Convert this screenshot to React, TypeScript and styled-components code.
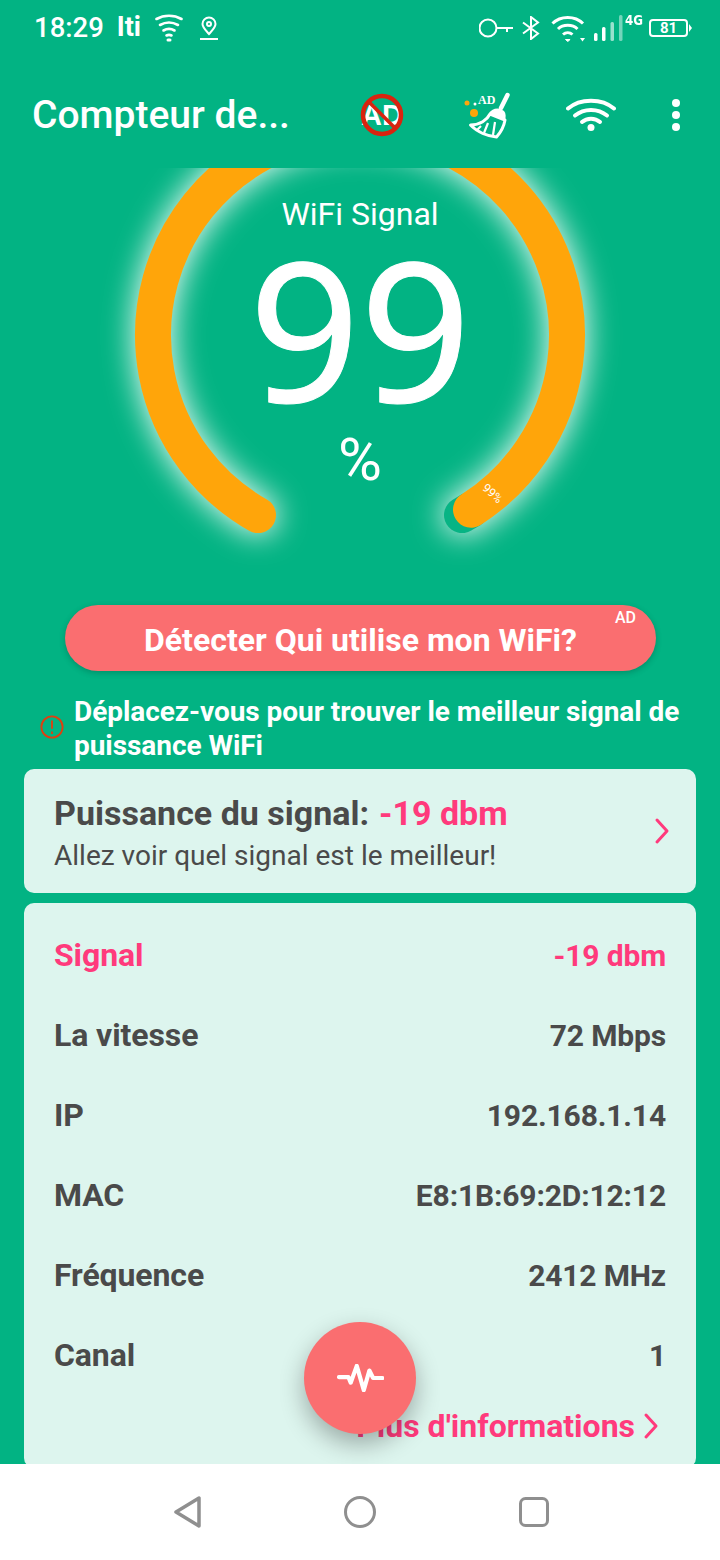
import styled, { createGlobalStyle } from "styled-components";

const GREEN = "#02b383";
const PANEL = "#ddf5ee";
const CORAL = "#fa6e70";
const PINK = "#ff3a7c";
const DARK = "#4a4a4a";
const ORANGE = "#ffa50a";

const GlobalStyle = createGlobalStyle`
  html, body {
    margin: 0;
    padding: 0;
    background: #fff;
  }
  * {
    box-sizing: border-box;
  }
`;

const Screen = styled.div`
  width: 720px;
  height: 1560px;
  position: relative;
  display: flex;
  flex-direction: column;
  overflow: hidden;
  background: ${GREEN};
  font-family: Roboto, "Liberation Sans", sans-serif;
  color: #fff;
`;

const StatusBar = styled.div`
  height: 56px;
  flex: none;
  display: flex;
  align-items: center;
  justify-content: space-between;
  padding: 0 32px 0 34px;
`;

const StatusGroup = styled.div`
  display: flex;
  align-items: center;
`;

const Clock = styled.span`
  font-size: 27.5px;
  font-weight: 500;
  line-height: 32px;
  margin-right: 13px;
`;

const Carrier = styled.span`
  font-size: 27px;
  font-weight: 700;
  line-height: 28px;
  margin: -2px 14px 0 0;
`;

const StatusIcon = styled.svg<{ $after?: number }>`
  display: block;
  flex: none;
  margin-right: ${(p) => p.$after ?? 0}px;
`;

const NetworkTag = styled.span`
  font-family: "DejaVu Sans", sans-serif;
  font-size: 14px;
  font-weight: 700;
  line-height: 14px;
  width: 18px;
  margin: -16px 6px 0 2px;
  transform: scaleX(0.85);
  transform-origin: left center;
`;

const Battery = styled.div`
  position: relative;
  width: 39px;
  height: 18px;
  border: 2px solid #fff;
  border-radius: 4px;
  font-size: 15px;
  font-weight: 700;
  line-height: 14px;
  text-align: center;
  &::after {
    content: "";
    position: absolute;
    top: 3px;
    right: -6px;
    border-left: 3px solid #fff;
    border-top: 4px solid transparent;
    border-bottom: 4px solid transparent;
  }
`;

const Toolbar = styled.div`
  height: 112px;
  flex: none;
  display: flex;
  align-items: center;
  padding: 6px 6px 0 32px;
`;

const Title = styled.div`
  flex: 1;
  font-size: 39px;
  font-weight: 500;
  line-height: 46px;
  white-space: nowrap;
`;

const Actions = styled.div`
  display: grid;
  grid-template-columns: 108px 108px 94px 76px;
  align-items: center;
  justify-items: center;
`;

const Gauge = styled.div`
  position: relative;
  height: 437px;
  flex: none;
  overflow: hidden;
  display: flex;
  flex-direction: column;
  align-items: center;
`;

const GaugeDrawing = styled.svg`
  position: absolute;
  inset: 0;
`;

const GaugeLabel = styled.div`
  position: relative;
  margin-top: 27px;
  font-size: 32px;
  line-height: 38px;
`;

const GaugeValue = styled.div`
  position: relative;
  font-family: "Noto Sans", "Open Sans", sans-serif;
  font-size: 194px;
  line-height: 188px;
  -webkit-text-stroke: 1px #fff;
`;

const GaugeUnit = styled.div`
  position: relative;
  margin-top: 4px;
  font-size: 60px;
  line-height: 70px;
`;

const DetectButton = styled.div`
  position: relative;
  flex: none;
  height: 66px;
  margin: 0 64px 0 65px;
  padding-top: 3px;
  border-radius: 33px;
  background: ${CORAL};
  box-shadow: 0 2px 6px rgba(0, 0, 0, 0.2);
  display: flex;
  align-items: center;
  justify-content: center;
  font-size: 32px;
  font-weight: 700;
`;

const AdBadge = styled.span`
  position: absolute;
  top: 3px;
  right: 20px;
  font-size: 16px;
  font-weight: 500;
  line-height: 20px;
`;

const Notice = styled.div`
  flex: none;
  margin: 24px 30px 6px 40px;
  display: flex;
  align-items: center;
  gap: 10px;
  font-size: 28px;
  font-weight: 700;
  line-height: 34px;
  letter-spacing: -0.05px;
  svg {
    flex: none;
    margin-top: -4px;
  }
`;

const Panel = styled.div`
  flex: none;
  background: ${PANEL};
  border-radius: 10px;
  margin: 0 24px;
  color: ${DARK};
`;

const SignalPanel = styled(Panel)`
  height: 124px;
  padding: 0 26px 0 30px;
  margin-bottom: 10px;
  display: flex;
  align-items: center;
  justify-content: space-between;
`;

const SignalText = styled.div`
  padding-top: 5px;
`;

const SignalHeading = styled.div`
  font-size: 34px;
  font-weight: 700;
  line-height: 40px;
`;

const SignalValue = styled.span`
  color: ${PINK};
  margin-left: 10px;
`;

const SignalHint = styled.div`
  font-size: 28px;
  line-height: 36px;
  margin-top: 5px;
`;

const DetailsPanel = styled(Panel)`
  height: 565px;
  padding: 12px 30px 0;
`;

const DetailRow = styled.div<{ $accent?: boolean }>`
  height: 80px;
  display: flex;
  align-items: center;
  justify-content: space-between;
  font-size: 30px;
  font-weight: 700;
  letter-spacing: -0.15px;
  color: ${(p) => (p.$accent ? PINK : DARK)};
`;

const RowLabel = styled.span`
  font-size: 32px;
  letter-spacing: -0.1px;
`;

const MoreLink = styled.div`
  height: 62px;
  display: flex;
  align-items: center;
  justify-content: flex-end;
  gap: 8px;
  margin-right: 7px;
  font-size: 32px;
  font-weight: 700;
  color: ${PINK};
`;

const PulseButton = styled.div`
  position: absolute;
  left: 304px;
  top: 1322px;
  width: 112px;
  height: 112px;
  border-radius: 50%;
  background: ${CORAL};
  box-shadow: 0 10px 24px rgba(0, 0, 0, 0.3);
  display: flex;
  align-items: center;
  justify-content: center;
`;

const NavBar = styled.div`
  position: absolute;
  left: 0;
  right: 0;
  bottom: 0;
  height: 96px;
  background: #fff;
  display: grid;
  grid-template-columns: repeat(3, 173.5px);
  justify-content: center;
  justify-items: center;
  align-items: center;
`;

const Chevron = () => (
  <svg width="16" height="28" viewBox="0 0 16 28" fill="none">
    <path d="M3 3l10 11L3 25" stroke={PINK} strokeWidth="3" strokeLinecap="round" strokeLinejoin="round" />
  </svg>
);

const RingArcs = {
  full: "M258 347.100A207 207 0 1 1 462 347.100",
  level: "M258 347.100A207 207 0 1 1 471 341.700",
  tail: "M471 341.700L462 347.100",
};

const details = [
  { label: "La vitesse", value: "72 Mbps" },
  { label: "IP", value: "192.168.1.14" },
  { label: "MAC", value: "E8:1B:69:2D:12:12" },
  { label: "Fréquence", value: "2412 MHz" },
  { label: "Canal", value: "1" },
];

export default function App() {
  return (
    <Screen>
      <GlobalStyle />
      <StatusBar>
        <StatusGroup>
          <Clock>18:29</Clock>
          <Carrier>Iti</Carrier>
          <StatusIcon $after={17} width="28" height="28" viewBox="0 0 28 28" fill="none" stroke="#fff" strokeWidth="2.6" strokeLinecap="round">
            <path d="M1.5 5C9 .7 19 .7 26.5 5" />
            <path d="M5 11c5.500-3 12.500-3 18 0" />
            <path d="M8.500 16.500c3.500-2 7.500-2 11 0" />
            <path d="M11.500 21.500c1.600-.8 3.400-.8 5 0" />
            <path d="M13 26h2" strokeWidth="3" />
          </StatusIcon>
          <StatusIcon width="18" height="24" viewBox="0 0 18 24" fill="none" stroke="#fff" strokeWidth="2">
            <path d="M9 18C6 14.500 2.500 11.500 2.500 8a6.500 6.500 0 0 1 13 0c0 3.500-3.500 6.500-6.500 10z" />
            <circle cx="9" cy="8" r="2" />
            <path d="M0 23h18" />
          </StatusIcon>
        </StatusGroup>
        <StatusGroup>
          <StatusIcon $after={9} width="34" height="20" viewBox="0 0 34 20" fill="none" stroke="#fff" strokeWidth="2">
            <circle cx="9" cy="10" r="8.500" />
            <path d="M18 10h16M28 10v4" />
          </StatusIcon>
          <StatusIcon $after={11} width="18" height="24" viewBox="0 0 18 24" fill="none" stroke="#fff" strokeWidth="2">
            <path d="M1 6.500l15 11L9 23V1l7 5.500L1 17.500" />
          </StatusIcon>
          <StatusIcon $after={8} width="35" height="27" viewBox="0 0 35 27" fill="none" stroke="#fff" strokeWidth="3">
            <path d="M1.500 8.500C9.500 .5 24 .5 32 8.500" />
            <path d="M7 14c5-5 14.500-5 19.500 0" />
            <path d="M12 19.500c2.800-2.500 6.700-2.500 9.500 0" />
            <path d="M14.500 24.500l2.300 2 2.300-2z" fill="#fff" strokeWidth="1" />
            <path d="M29 23h5l-2.500 3.500z" fill="#fff" stroke="none" />
          </StatusIcon>
          <StatusIcon width="29" height="26" viewBox="0 0 29 26" fill="#fff">
            <rect x="0" y="18" width="3.500" height="8" rx="1.500" />
            <rect x="8" y="12" width="3.500" height="14" rx="1.500" />
            <rect x="16.500" y="7" width="3.500" height="19" rx="1.500" opacity="0.6" />
            <rect x="25" y="0" width="3.500" height="26" rx="1.500" opacity="0.45" />
          </StatusIcon>
          <NetworkTag>4G</NetworkTag>
          <Battery>81</Battery>
        </StatusGroup>
      </StatusBar>

      <Toolbar>
        <Title>Compteur de...</Title>
        <Actions>
          <svg width="46" height="46" viewBox="0 0 46 46" fill="none">
            <text x="23" y="33" textAnchor="middle" fontFamily="Liberation Sans, sans-serif" fontWeight="700" fontSize="29" fill="#fff">AD</text>
            <circle cx="23" cy="23" r="19" stroke="#d9230f" strokeWidth="4.500" />
            <path d="M10 10l26 26" stroke="#d9230f" strokeWidth="3.500" />
          </svg>
          <svg width="60" height="50" viewBox="0 0 60 50" fill="none">
            <circle cx="7" cy="13" r="2.500" fill={ORANGE} />
            <circle cx="14" cy="23" r="4" fill={ORANGE} />
            <circle cx="15" cy="14" r="1.500" fill="#fff" />
            <text x="18" y="14" fontFamily="Liberation Serif, serif" fontWeight="700" fontSize="12" fill="#fff">AD</text>
            <path d="M47.500 5L41 18" stroke="#fff" strokeWidth="4.500" strokeLinecap="round" />
            <path d="M29 23c3-4 9-7 15-2 2 2 2 6 1 9L29 23z" fill="#fff" />
            <path d="M10.500 35C20 35 27 30 30 24l15 6c-1 6-4 12-8.500 17C28 46 17 42 10.500 35z" stroke="#fff" strokeWidth="3" strokeLinejoin="round" />
            <path d="M21 36l-4 4M28 33l-4 10M35 32l-2 13" stroke="#fff" strokeWidth="2.200" />
          </svg>
          <svg width="50" height="34" viewBox="0 0 50 34" fill="none" stroke="#fff" strokeWidth="4" strokeLinecap="round">
            <path d="M2 10.500C14 0 36 0 48 10.500" />
            <path d="M9 17.500C18 10 32 10 41 17.500" />
            <path d="M16 24c5-4.500 13-4.500 18 0" />
            <circle cx="25" cy="29.500" r="3.500" fill="#fff" stroke="none" />
          </svg>
          <svg width="8" height="32" viewBox="0 0 8 32" fill="#fff">
            <circle cx="4" cy="4" r="4" />
            <circle cx="4" cy="16" r="4" />
            <circle cx="4" cy="28" r="4" />
          </svg>
        </Actions>
      </Toolbar>

      <Gauge>
        <GaugeDrawing width="720" height="437" viewBox="0 0 720 437" fill="none">
          <defs>
            <filter id="ringGlow" filterUnits="userSpaceOnUse" x="0" y="-120" width="720" height="557">
              <feGaussianBlur stdDeviation="15" />
            </filter>
          </defs>
          <path d={RingArcs.full} stroke="#fff" strokeOpacity="0.9" strokeWidth="40" strokeLinecap="round" filter="url(#ringGlow)" />
          <path d={RingArcs.tail} stroke="#07b484" strokeWidth="36" strokeLinecap="round" />
          <path d={RingArcs.level} stroke={ORANGE} strokeWidth="36" strokeLinecap="round" />
          <text transform="translate(492 326) rotate(42)" textAnchor="middle" dominantBaseline="middle" fontFamily="Roboto, sans-serif" fontSize="12" fill="#fff">99%</text>
        </GaugeDrawing>
        <GaugeLabel>WiFi Signal</GaugeLabel>
        <GaugeValue>99</GaugeValue>
        <GaugeUnit>%</GaugeUnit>
      </Gauge>

      <DetectButton>
        Détecter Qui utilise mon WiFi?
        <AdBadge>AD</AdBadge>
      </DetectButton>

      <Notice>
        <svg width="24" height="24" viewBox="0 0 26 26" fill="none" stroke="#df3f10" strokeWidth="2">
          <circle cx="13" cy="13" r="11.500" />
          <path d="M13 6v9M13 18v2.500" />
        </svg>
        <span>Déplacez-vous pour trouver le meilleur signal de puissance WiFi</span>
      </Notice>

      <SignalPanel>
        <SignalText>
          <SignalHeading>
            Puissance du signal:<SignalValue>-19 dbm</SignalValue>
          </SignalHeading>
          <SignalHint>Allez voir quel signal est le meilleur!</SignalHint>
        </SignalText>
        <Chevron />
      </SignalPanel>

      <DetailsPanel>
        <DetailRow $accent>
          <RowLabel>Signal</RowLabel>
          <span>-19 dbm</span>
        </DetailRow>
        {details.map((row) => (
          <DetailRow key={row.label}>
            <RowLabel>{row.label}</RowLabel>
            <span>{row.value}</span>
          </DetailRow>
        ))}
        <MoreLink>
          Plus d'informations
          <Chevron />
        </MoreLink>
      </DetailsPanel>

      <PulseButton>
        <svg width="47" height="28" viewBox="0 0 50 30" fill="none">
          <path d="M2 14h10l2.500 6 6.500-18 7.500 26 6-21 4 8h10" stroke="#fff" strokeWidth="4.500" strokeLinecap="round" strokeLinejoin="round" />
        </svg>
      </PulseButton>

      <NavBar>
        <svg width="32" height="36" viewBox="0 0 32 36" fill="none">
          <path d="M28 4v28L5 18z" stroke="#8f8f8f" strokeWidth="3.500" strokeLinejoin="round" />
        </svg>
        <svg width="32" height="32" viewBox="0 0 32 32" fill="none">
          <circle cx="16" cy="16" r="14.500" stroke="#8f8f8f" strokeWidth="3" />
        </svg>
        <svg width="30" height="30" viewBox="0 0 30 30" fill="none">
          <rect x="1.500" y="1.500" width="27" height="27" rx="5" stroke="#8f8f8f" strokeWidth="3" />
        </svg>
      </NavBar>
    </Screen>
  );
}
